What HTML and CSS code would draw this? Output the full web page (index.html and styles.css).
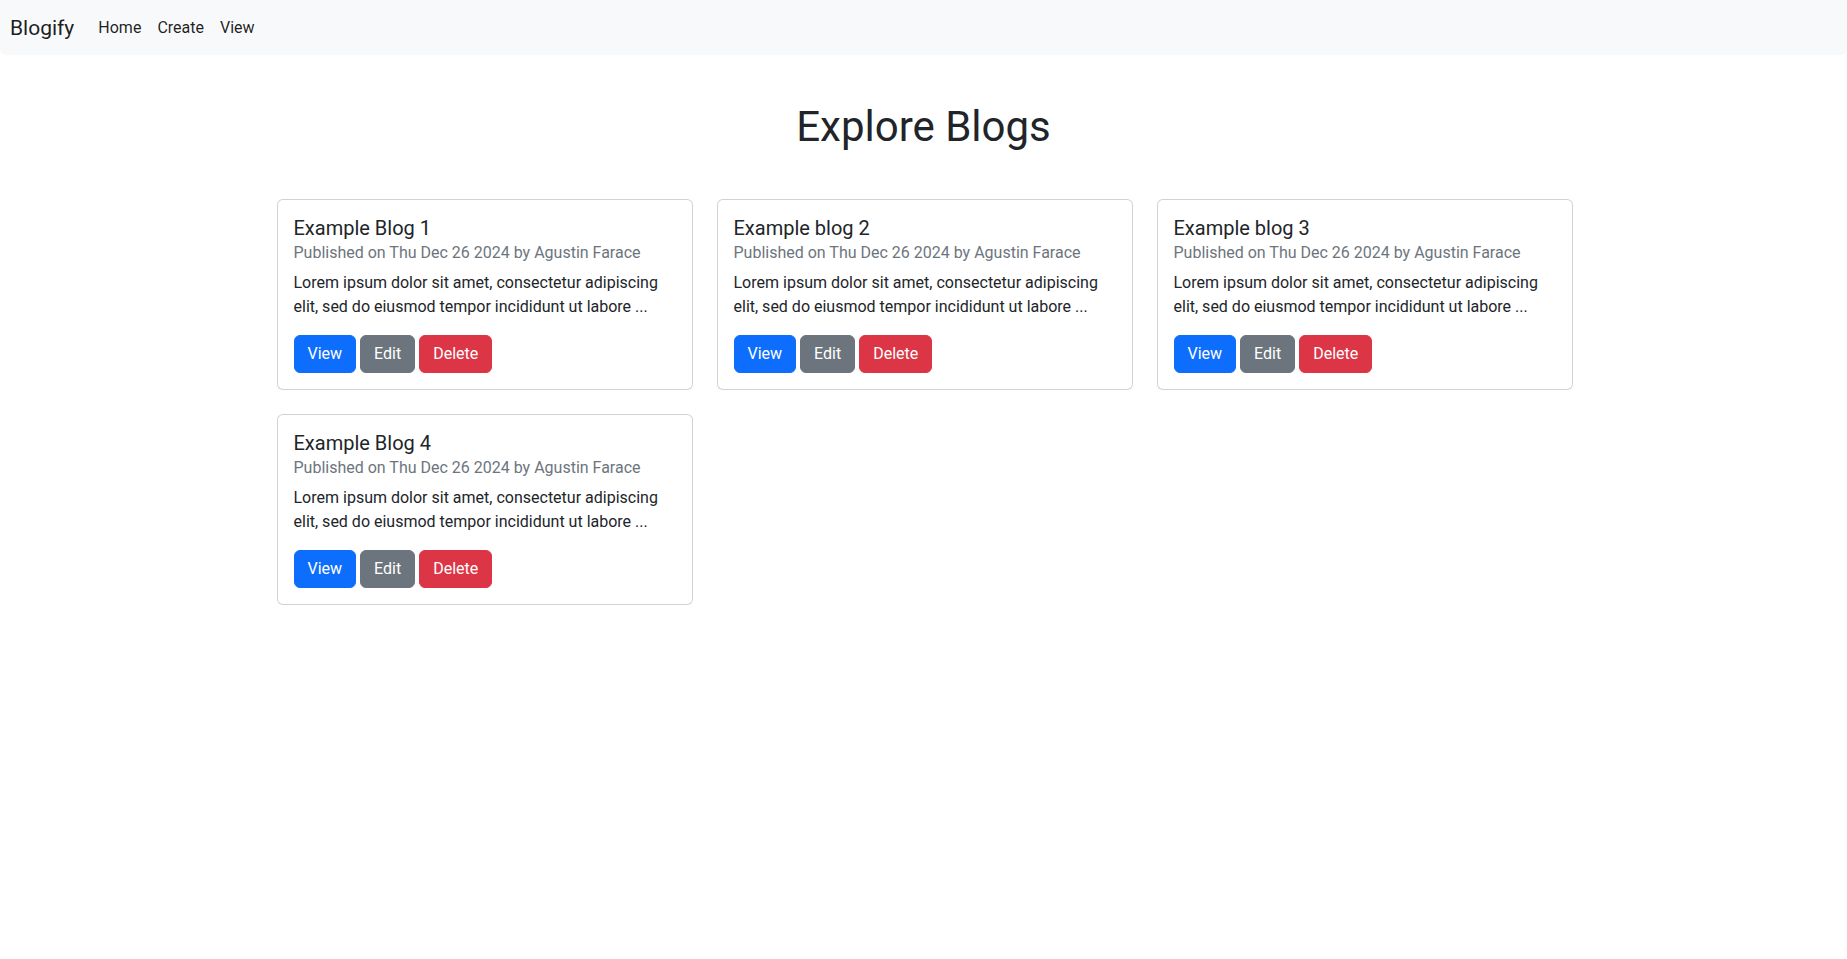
FILE: index.html
```html
<!DOCTYPE html>
<html lang="en">
<head>
<meta charset="utf-8">
<title>Blogify</title>
<link rel="stylesheet" href="styles.css">
</head>
<body>
<nav class="navbar">
  <a class="brand" href="#">Blogify</a>
  <ul class="nav">
    <li><a class="nav-link" href="#">Home</a></li>
    <li><a class="nav-link" href="#">Create</a></li>
    <li><a class="nav-link" href="#">View</a></li>
  </ul>
</nav>
<main class="container">
  <h1 class="page-title">Explore Blogs</h1>
  <div class="grid">
    <div class="card"><div class="card-body">
      <h5 class="card-title">Example Blog 1</h5>
      <p class="card-subtitle">Published on Thu Dec 26 2024 by Agustin Farace</p>
      <p class="card-text">Lorem ipsum dolor sit amet, consectetur adipiscing elit, sed do eiusmod tempor incididunt ut labore ...</p>
      <div class="actions"><button class="btn primary">View</button><button class="btn secondary">Edit</button><button class="btn danger">Delete</button></div>
    </div></div>
    <div class="card"><div class="card-body">
      <h5 class="card-title">Example blog 2</h5>
      <p class="card-subtitle">Published on Thu Dec 26 2024 by Agustin Farace</p>
      <p class="card-text">Lorem ipsum dolor sit amet, consectetur adipiscing elit, sed do eiusmod tempor incididunt ut labore ...</p>
      <div class="actions"><button class="btn primary">View</button><button class="btn secondary">Edit</button><button class="btn danger">Delete</button></div>
    </div></div>
    <div class="card"><div class="card-body">
      <h5 class="card-title">Example blog 3</h5>
      <p class="card-subtitle">Published on Thu Dec 26 2024 by Agustin Farace</p>
      <p class="card-text">Lorem ipsum dolor sit amet, consectetur adipiscing elit, sed do eiusmod tempor incididunt ut labore ...</p>
      <div class="actions"><button class="btn primary">View</button><button class="btn secondary">Edit</button><button class="btn danger">Delete</button></div>
    </div></div>
    <div class="card"><div class="card-body">
      <h5 class="card-title">Example Blog 4</h5>
      <p class="card-subtitle">Published on Thu Dec 26 2024 by Agustin Farace</p>
      <p class="card-text">Lorem ipsum dolor sit amet, consectetur adipiscing elit, sed do eiusmod tempor incididunt ut labore ...</p>
      <div class="actions"><button class="btn primary">View</button><button class="btn secondary">Edit</button><button class="btn danger">Delete</button></div>
    </div></div>
  </div>
</main>
</body>
</html>
```
FILE: styles.css
```css
* { box-sizing: border-box; }
body {
  margin: 0;
  font-family: Roboto, "Noto Sans", sans-serif;
  font-size: 16px;
  line-height: 1.5;
  color: #212529;
  background: #fff;
}
.navbar {
  display: flex;
  align-items: center;
  height: 55px;
  padding: 0 10px;
  background: #f8f9fa;
  border-radius: 0 0 6px 6px;
}
.brand {
  font-size: 21px;
  line-height: 30px;
  color: rgba(0,0,0,.9);
  text-decoration: none;
  margin-right: 16px;
}
.nav { display: flex; list-style: none; margin: 0; padding: 0; }
.nav-link {
  display: block;
  padding: 8px;
  color: rgba(0,0,0,.88);
  text-decoration: none;
}
.container {
  max-width: 1320px;
  margin: 0 auto;
  padding: 0 12px;
}
.page-title {
  text-align: center;
  font-size: 42px;
  font-weight: 400;
  line-height: 48px;
  margin: 48px 0 48px;
}
.grid {
  display: grid;
  grid-template-columns: repeat(3, 416px);
  justify-content: center;
  gap: 24px;
  transform: translateX(1px);
}
.card {
  border: 1px solid rgba(0,0,0,.175);
  border-radius: 6px;
  background: #fff;
}
.card-body { padding: 16px; }
.card-title { font-size: 20px; font-weight: 400; line-height: 1.2; margin: 0 0 1px; }
.card-subtitle { color: #6c757d; margin: 0 0 6px; }
.card-text { margin: 0 0 16px; }
.actions { display: flex; gap: 4px; }
.btn {
  font: inherit;
  font-size: 16px;
  line-height: 24px;
  padding: 6px 13px;
  border: 1px solid transparent;
  border-radius: 6px;
  color: #fff;
  cursor: pointer;
}
.primary { background: #0d6efd; border-color: #0d6efd; }
.secondary { background: #6c757d; border-color: #6c757d; }
.danger { background: #dc3545; border-color: #dc3545; }
```
